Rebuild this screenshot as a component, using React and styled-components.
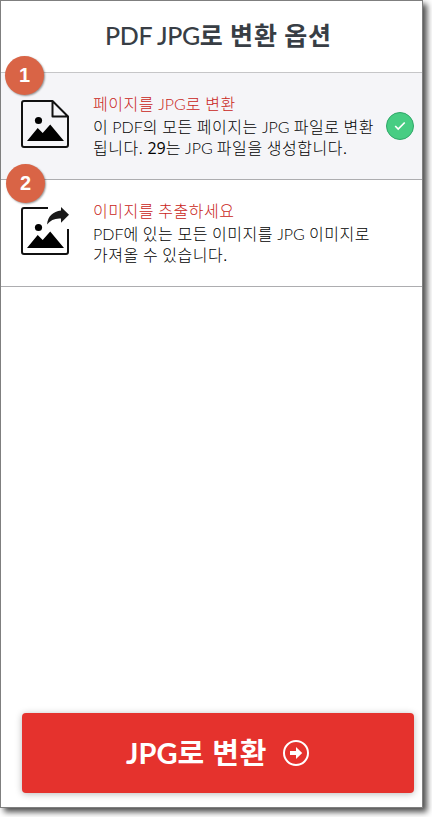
import React from "react";
import styled, { createGlobalStyle } from "styled-components";

const GlobalStyle = createGlobalStyle`
  * { box-sizing: border-box; }
  html { height: 100%; background: #fff; }
  body { margin: 0; }
`;

const Page = styled.div`
  height: 817px;
  overflow: hidden;
`;

const Panel = styled.main`
  width: 423px;
  height: 808px;
  border: 1px solid #7f7f7f;
  background: #fff;
  box-shadow: 4px 4px 6px rgba(0, 0, 0, 0.7);
  display: flex;
  flex-direction: column;
  font-family: "Noto Sans CJK KR", sans-serif;
`;

const Header = styled.header`
  height: 72px;
  flex: none;
  border-bottom: 1px solid #c6c6c8;
  padding-left: 104px;
  display: flex;
  align-items: center;
`;

const Title = styled.h1`
  margin: 0;
  padding-bottom: 4px;
  font-size: 25px;
  line-height: 36px;
  font-weight: 700;
  letter-spacing: 0.8px;
  color: #383e45;
  white-space: nowrap;
`;

const Latin = styled.span`
  font-family: ${(p) => p.$family || "Lato"}, sans-serif;
  font-weight: ${(p) => p.$weight || 300};
  letter-spacing: ${(p) => p.$track || 0}px;
`;

const Option = styled.section`
  position: relative;
  height: 107px;
  flex: none;
  border-bottom: 1px solid #adadb0;
  background: ${(p) => (p.$selected ? "#f5f5f8" : "#fff")};
  display: flex;
  padding-left: 20px;
`;

const Glyph = styled.svg`
  width: 48px;
  height: 50px;
  margin-top: 27px;
  flex: none;
`;

const Copy = styled.div`
  margin: 19px 0 0 24px;
  width: 293px;
  flex: none;
`;

const OptionName = styled.h2`
  margin: 0 0 1px;
  font-size: 16px;
  font-weight: 300;
  line-height: 23px;
  letter-spacing: 0.55px;
  color: #c92420;
  white-space: nowrap;
`;

const Line = styled.p`
  margin: 0;
  font-size: 16px;
  font-weight: 300;
  line-height: 20px;
  letter-spacing: 0.55px;
  color: #000;
  white-space: nowrap;
`;

const Check = styled.span`
  width: 28px;
  height: 28px;
  margin-top: 39px;
  border: 1px solid #2fa768;
  border-radius: 50%;
  background: #47cd83;
  display: flex;
  align-items: center;
  justify-content: center;
`;

const Badge = styled.span`
  position: absolute;
  left: ${(p) => p.$left}px;
  top: ${(p) => p.$top}px;
  width: 39px;
  height: 39px;
  border-radius: 50%;
  background: #d96446;
  box-shadow: 1px 1px 2px rgba(0, 0, 0, 0.4);
  color: #fff;
  font: 700 20px/39px "Liberation Sans", sans-serif;
  text-align: center;
`;

const Action = styled.button`
  margin: auto 8px 14px 21px;
  width: 392px;
  height: 80px;
  flex: none;
  padding: 0 0 0 104px;
  border: 0;
  border-radius: 4px;
  background: #e5322d;
  box-shadow: 0 1px 7px rgba(0, 0, 0, 0.28);
  color: #fff;
  font: 700 29px/40px "Noto Sans CJK KR", sans-serif;
  letter-spacing: 0.8px;
  display: flex;
  align-items: center;
  gap: 16px;
  white-space: nowrap;
`;

const ActionLabel = styled.span`
  padding-bottom: 3px;
`;

const Mountains = () => (
  <>
    <circle cx="17.5" cy="20.5" r="3.6" />
    <path d="M6 41 16.7 28l5 5 7.5-8.5L43 41Z" />
  </>
);

export default function App() {
  return (
    <Page>
      <GlobalStyle />
      <Panel>
        <Header>
          <Title><Latin $weight={500} $track={-0.35}>PDF JPG</Latin>로 변환 옵션</Title>
        </Header>

        <Option $selected>
          <Badge $left={4} $top={-17}>1</Badge>
          <Glyph viewBox="0 0 48 50">
            <path d="M31.5 1H3Q1 1 1 3v42q0 2 2 2h42q2 0 2-2V16.5Z M31.5 1v15.5H47" fill="none" stroke="#111" strokeWidth="2" strokeLinejoin="round" />
            <Mountains />
          </Glyph>
          <Copy>
            <OptionName>페이지를 <Latin>JPG</Latin>로 변환</OptionName>
            <Line>이 <Latin>PDF</Latin>의 모든 페이지는 <Latin>JPG</Latin> 파일로 변환</Line>
            <Line>됩니다. <Latin $family="Open Sans" $weight={400}>29</Latin>는 <Latin>JPG</Latin> 파일을 생성합니다.</Line>
          </Copy>
          <Check>
            <svg width="12" height="10" viewBox="0 0 12 10">
              <path d="m1.2 5 3 3 6.5-6.5" fill="none" stroke="#fff" strokeWidth="1.7" />
            </svg>
          </Check>
        </Option>

        <Option>
          <Badge $left={5} $top={-16}>2</Badge>
          <Glyph viewBox="0 0 48 50">
            <path d="M27 1H3Q1 1 1 3v42q0 2 2 2h42q2 0 2-2V22" fill="none" stroke="#111" strokeWidth="2" />
            <path d="M26 17.5C27 9 32 4.500 40 3.500V0l8 7.800-8 8v-4.300C34 11 29.500 13 26 17.500Z" fill="#181818" />
            <Mountains />
          </Glyph>
          <Copy>
            <OptionName>이미지를 추출하세요</OptionName>
            <Line><Latin>PDF</Latin>에 있는 모든 이미지를 <Latin>JPG</Latin> 이미지로</Line>
            <Line>가져올 수 있습니다.</Line>
          </Copy>
        </Option>

        <Action>
          <ActionLabel><Latin $weight={700}>JPG</Latin>로 변환</ActionLabel>
          <svg width="26" height="26" viewBox="0 0 26 26">
            <circle cx="13" cy="13" r="12" fill="none" stroke="#fff" strokeWidth="2" />
            <path d="M7 10.9h6V7l6.2 6-6.2 6v-3.9H7Z" fill="#fff" />
          </svg>
        </Action>
      </Panel>
    </Page>
  );
}
